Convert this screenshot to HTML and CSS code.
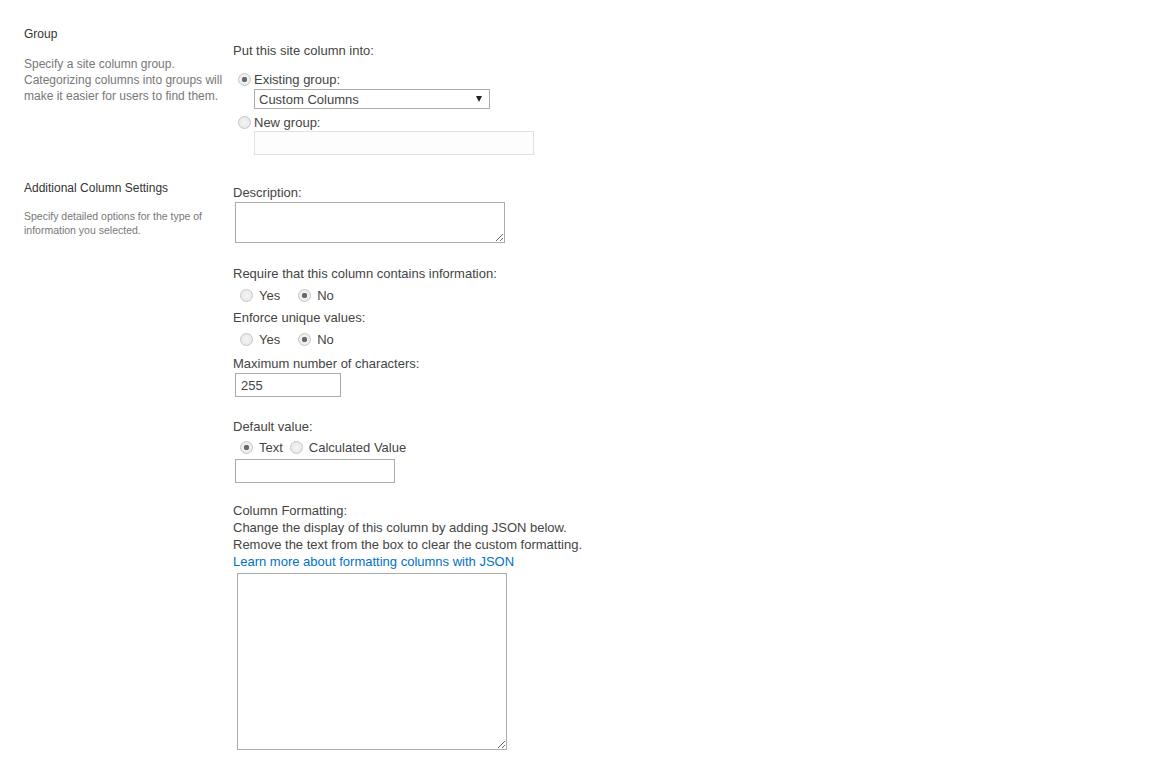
FILE: index.html
```html
<!DOCTYPE html>
<html>
<head>
<meta charset="utf-8">
<link rel="stylesheet" href="styles.css">
</head>
<body>
<div class="page">
  <section class="section sec-group">
    <div class="side">
      <h3 class="side-title t-group">Group</h3>
      <p class="side-desc">Specify a site column group. Categorizing columns into groups will make it easier for users to find them.</p>
    </div>
    <div class="main">
      <div class="lbl l-put">Put this site column into:</div>
      <label class="radio-row r-existing"><input type="radio" name="grp" checked><span>Existing group:</span></label>
      <div class="select"><span>Custom Columns</span><i class="arrow"></i></div>
      <label class="radio-row r-new"><input type="radio" name="grp"><span>New group:</span></label>
      <input class="field f-new" type="text" disabled>
    </div>
  </section>

  <section class="section sec-add">
    <div class="side">
      <h3 class="side-title t-add">Additional Column Settings</h3>
      <p class="side-desc small">Specify detailed options for the type of information you selected.</p>
    </div>
    <div class="main">
      <div class="lbl l-desc">Description:</div>
      <textarea class="area a-desc"></textarea>

      <div class="lbl l-req">Require that this column contains information:</div>
      <div class="choices">
        <label class="opt"><input type="radio" name="req"><span>Yes</span></label>
        <label class="opt"><input type="radio" name="req" checked><span>No</span></label>
      </div>

      <div class="lbl l-gap5">Enforce unique values:</div>
      <div class="choices">
        <label class="opt"><input type="radio" name="uniq"><span>Yes</span></label>
        <label class="opt"><input type="radio" name="uniq" checked><span>No</span></label>
      </div>

      <div class="lbl l-max">Maximum number of characters:</div>
      <input class="field f-max" type="text" value="255">

      <div class="lbl l-def">Default value:</div>
      <div class="choices tight">
        <label class="opt"><input type="radio" name="def" checked><span>Text</span></label>
        <label class="opt"><input type="radio" name="def"><span>Calculated Value</span></label>
      </div>
      <input class="field f-def" type="text">

      <div class="lbl l-fmt">Column Formatting:<br>Change the display of this column by adding JSON below.<br>Remove the text from the box to clear the custom formatting.<br><a href="#" class="link">Learn more about formatting columns with JSON</a></div>
      <textarea class="area a-fmt"></textarea>
    </div>
  </section>
</div>
</body>
</html>
```

FILE: styles.css
```css
html, body {
  margin: 0;
  padding: 0;
  background: #ffffff;
}

body {
  font-family: "Segoe UI", "Liberation Sans", Arial, sans-serif;
  color: #444444;
  font-size: 13px;
}

.page {
  padding-left: 24px;
}

.section {
  display: grid;
  grid-template-columns: 209px 1fr;
}

.sec-group {
  height: 171px;
}

.side-title {
  margin: 0;
  font-size: 12px;
  font-weight: normal;
  line-height: 16px;
  color: #333333;
}

.t-group { margin-top: 26px; }
.t-add { margin-top: 9px; }

.side-desc {
  margin: 14px 0 0;
  font-size: 12px;
  line-height: 16px;
  color: #777777;
  width: 200px;
}

.side-desc.small {
  font-size: 10.5px;
  line-height: 14px;
  margin-top: 13px;
}

.main {
  display: flex;
  flex-direction: column;
  align-items: flex-start;
}

.lbl {
  line-height: 17px;
}

.l-put { margin-top: 42px; }
.l-desc { margin-top: 13px; }
.l-req { margin-top: 22px; }
.l-gap5 { margin-top: 5px; }
.l-max { margin-top: 7px; }
.l-def { margin-top: 21px; }
.l-fmt { margin-top: 19px; }

.link {
  color: #0072c6;
  text-decoration: none;
}

/* radios */
input[type="radio"] {
  -webkit-appearance: none;
  appearance: none;
  width: 13px;
  height: 13px;
  margin: 0;
  border-radius: 50%;
  border: 1px solid #c6c6c6;
  background: radial-gradient(circle at 50% 50%, #f4f4f4 0, #e6e6e6 100%);
  box-sizing: border-box;
  flex: none;
  position: relative;
}

input[type="radio"]:checked {
  background: radial-gradient(circle at 50% 50%, #6a6a6a 0, #6a6a6a 2.5px, #f0f0f0 3px, #e8e8e8 100%);
}

.radio-row {
  display: flex;
  align-items: center;
  line-height: 17px;
  padding-left: 5px;
  gap: 3px;
}

.r-existing { margin-top: 12px; }
.r-new { margin-top: 5px; }

.choices {
  display: flex;
  align-items: center;
  padding-left: 7px;
  margin-top: 5px;
  gap: 18px;
  line-height: 17px;
}

.choices.tight {
  gap: 7px;
  margin-top: 4px;
}

.opt {
  display: flex;
  align-items: center;
  gap: 6px;
}

/* select */
.select {
  margin-top: 1px;
  margin-left: 21px;
  width: 236px;
  height: 20px;
  box-sizing: border-box;
  border: 1px solid #ababab;
  display: flex;
  align-items: center;
  justify-content: space-between;
  padding: 0 7px 0 4px;
  color: #444444;
}

.arrow {
  width: 0;
  height: 0;
  border-left: 3px solid transparent;
  border-right: 3px solid transparent;
  border-top: 6px solid #222222;
}

/* inputs */
.field {
  box-sizing: border-box;
  height: 24px;
  border: 1px solid #ababab;
  font-family: inherit;
  font-size: 13px;
  color: #444444;
  padding: 0 5px;
  margin: 0;
  background: #ffffff;
  outline: none;
}

.f-new {
  margin-top: 0px;
  margin-left: 21px;
  width: 280px;
  border-color: #e1e1e1;
  background: #fdfdfd;
}

.f-max {
  margin-top: 1px;
  margin-left: 2px;
  width: 106px;
}

.f-def {
  margin-top: 3px;
  margin-left: 2px;
  width: 160px;
}

.area {
  box-sizing: border-box;
  border: 1px solid #ababab;
  margin: 0;
  padding: 2px;
  font-family: inherit;
  font-size: 13px;
  outline: none;
  background: #ffffff;
}

.a-desc {
  margin-top: 1px;
  margin-left: 2px;
  width: 270px;
  height: 41px;
}

.a-fmt {
  margin-top: 3px;
  margin-left: 4px;
  width: 270px;
  height: 177px;
}
```
